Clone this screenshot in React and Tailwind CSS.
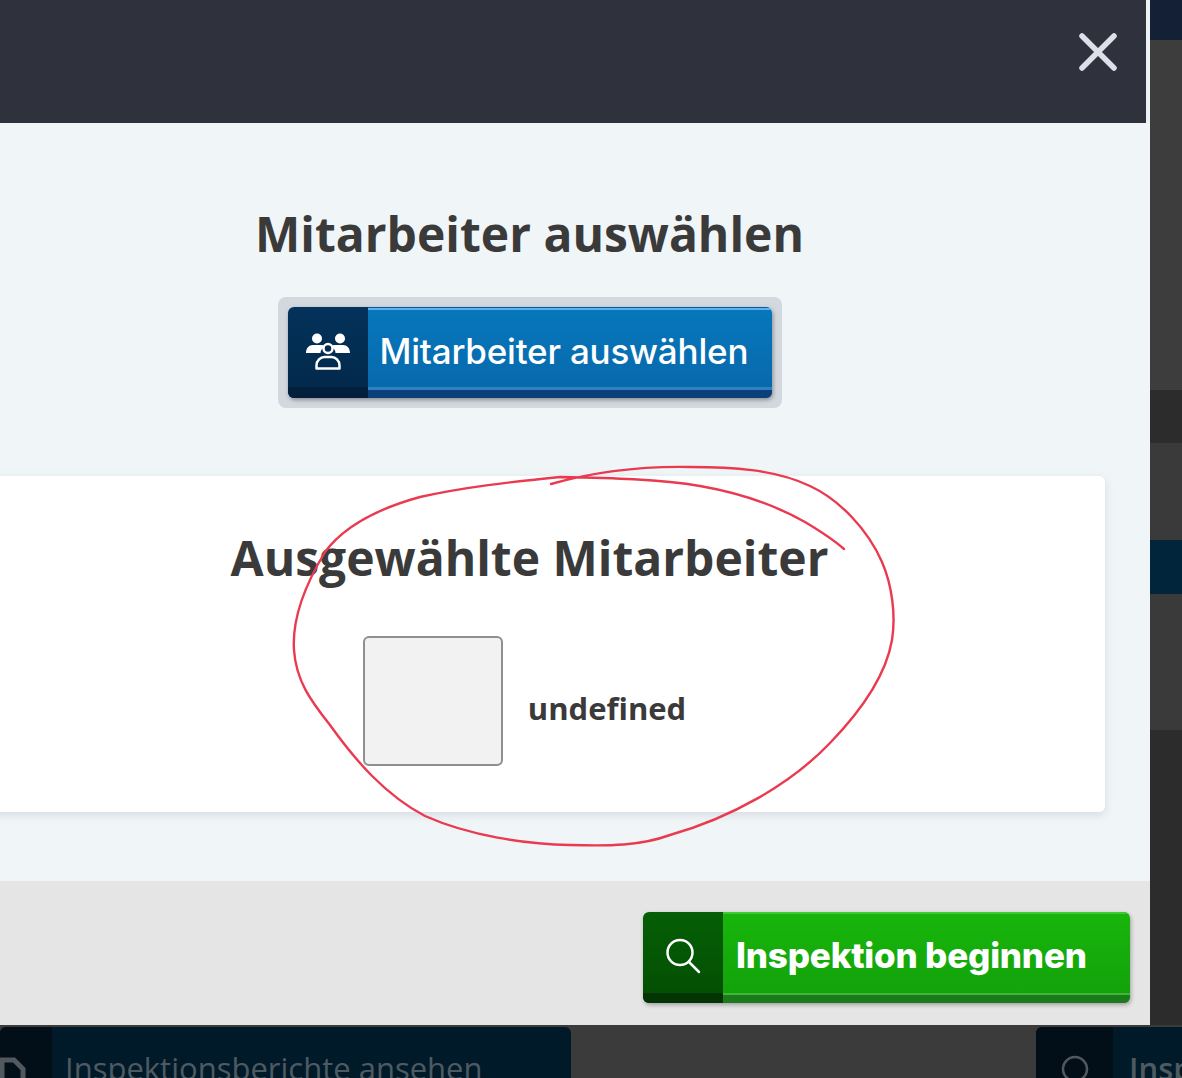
const sans = "font-['Open_Sans','Noto_Sans',sans-serif]";
const ui = "font-['Inter','Roboto',sans-serif]";

function UsersIcon() {
  return (
    <svg width="46" height="40" viewBox="0 0 46 40" fill="none">
      <circle cx="12" cy="6.5" r="5" fill="white" />
      <circle cx="35" cy="6.5" r="5" fill="white" />
      <path d="M1 21c0-5 3-8 7-8h8c2 0 3 .5 4 1.500-3 1.500-4.500 4-4.500 6.500z" fill="white" />
      <path d="M45 21c0-5-3-8-7-8h-8c-2 0-3 .5-4 1.500 3 1.500 4.500 4 4.500 6.500z" fill="white" />
      <circle cx="23" cy="16.500" r="4.500" stroke="white" strokeWidth="2.500" />
      <path d="M11.500 36.500v-3c0-5 4-8.500 8-8.500h7c4 0 8 3.500 8 8.500v3z" stroke="white" strokeWidth="2.500" strokeLinejoin="round" />
    </svg>
  );
}

function SearchIcon() {
  return (
    <svg width="36" height="36" viewBox="0 0 36 36" fill="none" stroke="white" strokeWidth="2.500" strokeLinecap="round">
      <circle cx="15" cy="14.500" r="12.500" />
      <path d="M24 24l10 10" />
    </svg>
  );
}

function AnnotationStroke() {
  return (
    <svg className="absolute left-0 top-0 pointer-events-none" width="1182" height="1078" fill="none">
      <path
        d="M551 484C590 473 640 466 690 467C730 467 775 469 810 486C840 500 868 530 882 562C892 585 896 615 892 640C886 675 860 712 830 743C790 785 730 818 670 835C640 846 610 846 570 845C525 844 470 836 425 816C385 795 355 760 330 725C310 700 296 680 294 650C292 620 305 585 325 552C345 525 380 508 420 497C465 487 510 482 560 477C610 478 660 479 700 486C740 493 775 505 805 522C820 531 835 541 844 549"
        stroke="#ea3a50"
        strokeWidth="2.400"
        strokeLinecap="round"
        strokeLinejoin="round"
      />
    </svg>
  );
}

export default function App() {
  return (
    <div className="relative h-[1078px] w-[1182px] overflow-hidden bg-[#3b3b3b]">
      <div className="flex h-[1025px]">
        <div className="ml-[-91px] flex w-[1241px] shrink-0 flex-col bg-[#f0f5f7]">
          <div className="flex h-[123px] shrink-0 border-r-4 border-[#eef1f5] bg-[#2f313c]">
            <div className="ml-auto mr-[29px] mt-[33px]">
              <svg width="38" height="38" viewBox="0 0 38 38" fill="none" stroke="#dde0e8" strokeWidth="5.500" strokeLinecap="round">
                <path d="M3 3l32 32M35 3L3 35" />
              </svg>
            </div>
          </div>

          <div className="flex flex-1 flex-col items-center">
            <h2 className={`mt-[76px] text-[48px] font-bold leading-[70px] text-[#3a3a3a] ${sans}`}>Mitarbeiter auswählen</h2>
            <div className="mt-[28px] rounded-lg bg-[#d3d8df] p-[10px]">
              <div className="flex h-[91px] w-[484px] overflow-hidden rounded-md shadow-[1px_2px_4px_rgba(0,0,0,0.35)]">
                <div className="flex w-[80px] shrink-0 items-center justify-center bg-[linear-gradient(#03325a,#02284a)] pb-[2px] shadow-[inset_0_-11px_0_#021f3b]">
                  <UsersIcon />
                </div>
                <div className={`flex flex-1 items-center bg-[linear-gradient(#0678bb,#0867ab)] pl-[12px] pb-[3px] text-[35px] font-medium tracking-[-0.2px] text-white shadow-[inset_0_1px_0_#0a5a96,inset_0_3px_0_#5cb0ee,inset_0_-8px_0_#0b3f7c,inset_0_-11px_0_#2f80c0] ${ui}`}>
                  Mitarbeiter auswählen
                </div>
              </div>
            </div>

            <div className="mt-[68px] flex h-[336px] w-[1151px] flex-col items-center rounded-md bg-white shadow-[0_3px_8px_rgba(120,130,150,0.22)]">
              <h2 className={`mt-[47px] text-[48px] font-bold leading-[70px] text-[#3a3a3a] ${sans}`}>Ausgewählte Mitarbeiter</h2>
              <div className="mt-[43px] flex items-center gap-[25px] pr-[10px]">
                <div className="h-[130px] w-[140px] rounded-md border-2 border-[#8f8f8f] bg-[#f2f2f2]"></div>
                <span className={`mt-[13px] text-[31px] font-bold leading-[44px] text-[#3a3a3a] ${sans}`}>undefined</span>
              </div>
            </div>
            <div className="flex-1"></div>
          </div>

          <div className="flex h-[144px] shrink-0 items-start justify-end bg-[#e5e5e5] pr-[20px] pt-[31px]">
            <div className="flex h-[91px] w-[487px] overflow-hidden rounded-md shadow-[1px_2px_4px_rgba(0,0,0,0.3)]">
              <div className="flex w-[80px] shrink-0 items-center justify-center bg-[linear-gradient(#055f05,#034e03)] pb-[3px] shadow-[inset_0_-10px_0_#033403]">
                <SearchIcon />
              </div>
              <div className={`flex flex-1 items-center bg-[linear-gradient(#18b60c,#12a00a)] pl-[13px] pb-[4px] text-[35px] font-extrabold tracking-[-0.2px] text-white shadow-[inset_0_2px_0_#3fc936,inset_0_-8px_0_#1d7a1a,inset_0_-10px_0_#3fb636] ${ui}`}>
                Inspektion beginnen
              </div>
            </div>
          </div>
        </div>

        <div className="flex w-[32px] shrink-0 flex-col bg-[#3b3b3b]">
          <div className="h-[40px] bg-[#142036]"></div>
          <div className="h-[350px] bg-[#3d3d3d]"></div>
          <div className="h-[53px] bg-[#2c2c2c]"></div>
          <div className="h-[97px] bg-[#3a3a3a]"></div>
          <div className="h-[54px] bg-[#01263c]"></div>
          <div className="h-[136px] bg-[#3a3a3a]"></div>
          <div className="flex-1 bg-[#2c2c2c]"></div>
        </div>
      </div>

      <div className="flex h-[53px] items-start pt-[2px]">
        <div className="flex h-[60px] w-[571px] shrink-0 overflow-hidden rounded-md bg-[#011a29]">
          <div className="flex w-[52px] shrink-0 justify-end bg-[#020f18] pr-[26px] pt-[30px]">
            <svg width="26" height="30" viewBox="0 0 26 30" fill="none" stroke="#52595e" strokeWidth="5">
              <path d="M2 30V3h12l9 9v18" />
            </svg>
          </div>
          <span className={`ml-[13px] mt-[19px] whitespace-nowrap text-[31px] leading-[44px] text-[#4e5a62] ${sans}`}>Inspektionsberichte ansehen</span>
        </div>
        <div className="ml-[465px] flex h-[60px] w-[200px] shrink-0 overflow-hidden rounded-md bg-[#011a29]">
          <div className="flex w-[77px] shrink-0 justify-center bg-[#020f18] pt-[27px]">
            <svg width="30" height="30" viewBox="0 0 30 30" fill="none" stroke="#52595e" strokeWidth="2.500">
              <circle cx="15" cy="15" r="12" />
            </svg>
          </div>
          <span className={`ml-[16px] mt-[19px] whitespace-nowrap text-[31px] font-semibold leading-[44px] text-[#4e5a62] ${sans}`}>Insp</span>
        </div>
      </div>

      <AnnotationStroke />
    </div>
  );
}
